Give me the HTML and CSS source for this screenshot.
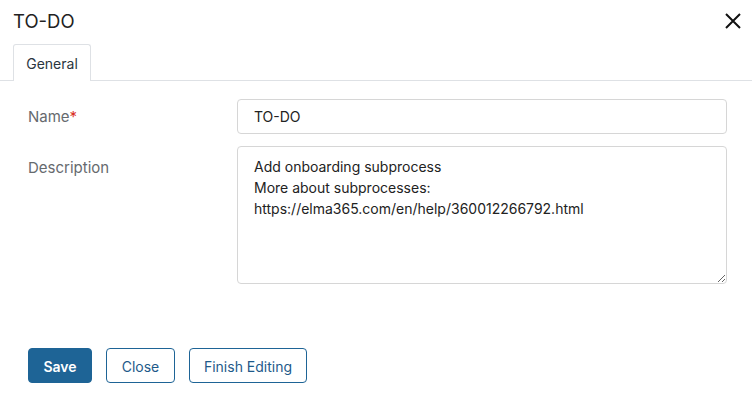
FILE: index.html
```html
<!DOCTYPE html>
<html lang="en">
<head>
<meta charset="utf-8">
<title>TO-DO</title>
<link rel="stylesheet" href="styles.css">
</head>
<body>
<div class="dialog">
  <header class="header">
    <h1 class="title">TO-DO</h1>
    <button class="close-btn" aria-label="Close">
      <svg width="16" height="16" viewBox="0 0 16 16"><path d="M1 1 L15 15 M15 1 L1 15" stroke="#111" stroke-width="2" fill="none"/></svg>
    </button>
  </header>
  <nav class="tabs">
    <div class="tab active">General</div>
  </nav>
  <form class="form">
    <div class="row">
      <label class="label">Name<span class="req">*</span></label>
      <input class="input" type="text" value="TO-DO">
    </div>
    <div class="row">
      <label class="label label-top">Description</label>
      <textarea class="textarea">Add onboarding subprocess
More about subprocesses:
https://elma365.com/en/help/360012266792.html</textarea>
    </div>
  </form>
  <div class="actions">
    <button class="btn btn-primary">Save</button>
    <button class="btn btn-outline btn-close">Close</button>
    <button class="btn btn-outline btn-finish">Finish Editing</button>
  </div>
</div>
</body>
</html>
```

FILE: styles.css
```css
* { box-sizing: border-box; }
html, body { margin: 0; padding: 0; background: #fff; }
body {
  font-family: Inter, "Liberation Sans", Arial, sans-serif;
  font-size: 14px;
  color: #333;
  width: 752px;
  height: 413px;
  overflow: hidden;
}
.dialog { display: flex; flex-direction: column; }
.header {
  height: 44px;
  display: flex;
  align-items: center;
  justify-content: space-between;
  padding: 0 11px 0 13px;
}
.title {
  margin: 0;
  font-size: 18.5px;
  font-weight: 400;
  color: #222;
  line-height: 24px;
  padding-bottom: 2px;
}
.close-btn {
  border: 0;
  background: none;
  padding: 0;
  width: 16px;
  height: 16px;
  margin-bottom: 2px;
  display: flex;
}
.tabs {
  height: 37px;
  border-bottom: 1px solid #dee1e5;
  padding-left: 13px;
  display: flex;
  align-items: flex-end;
}
.tab {
  width: 78px;
  height: 37px;
  border: 1px solid #dee1e5;
  border-bottom: 0;
  border-radius: 3px 3px 0 0;
  background: #fff;
  margin-bottom: -1px;
  display: flex;
  align-items: center;
  justify-content: center;
  color: #2a3640;
  padding-top: 1px;
}
.form {
  padding: 18px 25px 0 28px;
  display: flex;
  flex-direction: column;
  gap: 12px;
}
.row {
  display: flex;
  align-items: flex-start;
}
.label {
  width: 209px;
  flex: none;
  color: #666a6e;
  font-size: 15px;
  line-height: 35px;
}
.label-top { line-height: 21px; padding-top: 11px; }
.req { color: #d93025; }
.input, .textarea {
  width: 490px;
  border: 1px solid #d6d6d6;
  border-radius: 4px;
  font-family: inherit;
  font-size: 14px;
  color: #222;
  padding: 0 16px;
  background: #fff;
  outline: none;
}
.input { height: 35px; }
.textarea {
  height: 138px;
  padding: 9px 16px 7px;
  line-height: 21px;
  resize: vertical;
}
.actions {
  margin-top: 64px;
  padding-left: 28px;
  display: flex;
  gap: 14px;
}
.btn {
  height: 35px;
  border-radius: 4px;
  font-family: inherit;
  font-size: 14px;
  padding: 2px 0 0;
  cursor: pointer;
}
.btn-primary {
  width: 64px;
  background: #1e6496;
  border: 1px solid #1e6496;
  color: #fff;
  font-weight: 600;
}
.btn-outline {
  background: #fff;
  border: 1px solid #1e6496;
  color: #1e5a8a;
}
.btn-close { width: 69px; }
.btn-finish { width: 118px; }
```
